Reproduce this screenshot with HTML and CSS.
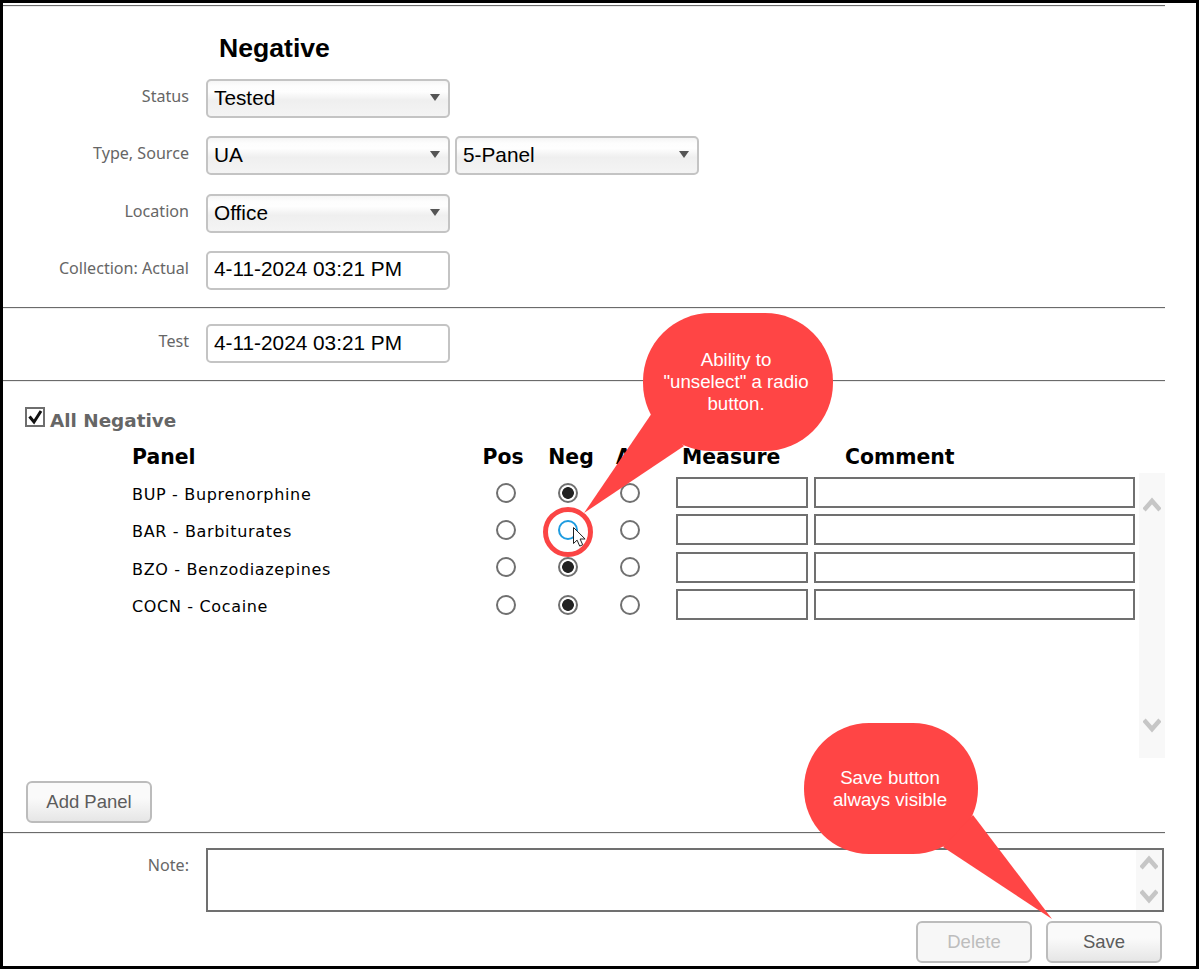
FILE: index.html
```html
<!DOCTYPE html>
<html lang="en">
<head>
<meta charset="utf-8">
<title>Drug test result</title>
<link rel="stylesheet" href="styles.css">
</head>
<body>
<div class="frame">
  <section class="section sec-collect">
    <h1 class="title">Negative</h1>
    <div class="field">
      <label class="label">Status</label>
      <div class="select"><span>Tested</span></div>
    </div>
    <div class="field">
      <label class="label">Type, Source</label>
      <div class="select"><span>UA</span></div>
      <div class="select"><span>5-Panel</span></div>
    </div>
    <div class="field">
      <label class="label">Location</label>
      <div class="select"><span>Office</span></div>
    </div>
    <div class="field">
      <label class="label">Collection: Actual</label>
      <input class="text" type="text" value="4-11-2024 03:21 PM">
    </div>
  </section>
  <section class="section sec-test">
    <div class="field">
      <label class="label">Test</label>
      <input class="text" type="text" value="4-11-2024 03:21 PM">
    </div>
  </section>
  <section class="section sec-panels">
    <div class="all-neg">
      <svg class="check" width="21" height="21" viewBox="0 0 21 21"><rect x="1" y="1" width="18" height="18" fill="#fff" stroke="#6e6e6e" stroke-width="2"/><path d="M4.5 9.5 9 15 16 4" fill="none" stroke="#111" stroke-width="3"/></svg>
      <span class="all-text">All Negative</span>
    </div>
    <div class="grid head">
      <div class="h-panel">Panel</div>
      <div class="h-radio h-pos">Pos</div>
      <div class="h-radio h-neg">Neg</div>
      <div class="h-radio h-alt">Alt</div>
      <div class="h-measure">Measure</div>
      <div class="h-comment">Comment</div>
    </div>
    <div class="scroller">
      <div class="rows">
        <div class="grid row">
          <div class="name">BUP - Buprenorphine</div>
          <input class="radio" type="radio" name="r1">
          <input class="radio" type="radio" name="r1" checked>
          <input class="radio" type="radio" name="r1">
          <input class="box measure" type="text">
          <input class="box" type="text">
        </div>
        <div class="grid row">
          <div class="name">BAR - Barbiturates</div>
          <input class="radio" type="radio" name="r2">
          <input class="radio hover" type="radio" name="r2">
          <input class="radio" type="radio" name="r2">
          <input class="box measure" type="text">
          <input class="box" type="text">
        </div>
        <div class="grid row">
          <div class="name">BZO - Benzodiazepines</div>
          <input class="radio" type="radio" name="r3">
          <input class="radio" type="radio" name="r3" checked>
          <input class="radio" type="radio" name="r3">
          <input class="box measure" type="text">
          <input class="box" type="text">
        </div>
        <div class="grid row">
          <div class="name">COCN - Cocaine</div>
          <input class="radio" type="radio" name="r4">
          <input class="radio" type="radio" name="r4" checked>
          <input class="radio" type="radio" name="r4">
          <input class="box measure" type="text">
          <input class="box" type="text">
        </div>
      </div>
      <div class="scrollbar">
        <svg width="18" height="15" viewBox="0 0 18 15"><path d="M1 13 9 4 17 13" fill="none" stroke="#c6c6c6" stroke-width="4.5"/></svg>
        <svg width="18" height="15" viewBox="0 0 18 15"><path d="M1 2 9 11 17 2" fill="none" stroke="#c6c6c6" stroke-width="4.5"/></svg>
      </div>
    </div>
    <button class="btn add" type="button">Add Panel</button>
  </section>
  <section class="section sec-note">
    <div class="field note-field">
      <label class="label note-label">Note:</label>
      <div class="note">
        <textarea class="note-text"></textarea>
        <div class="note-bar">
          <svg width="18" height="15" viewBox="0 0 18 15"><path d="M1 13 9 4 17 13" fill="none" stroke="#c6c6c6" stroke-width="4.5"/></svg>
          <svg width="18" height="15" viewBox="0 0 18 15"><path d="M1 2 9 11 17 2" fill="none" stroke="#c6c6c6" stroke-width="4.5"/></svg>
        </div>
      </div>
    </div>
    <div class="actions">
      <button class="btn disabled" type="button">Delete</button>
      <button class="btn" type="button">Save</button>
    </div>
  </section>
</div>
<svg class="overlay" width="1199" height="969" viewBox="0 0 1199 969">
  <g fill="#ff4545">
    <rect x="643" y="313" width="190" height="138" rx="68" ry="68"/>
    <path d="M652 413 584 513 684 446Z"/>
    <rect x="804" y="723" width="174" height="131" rx="65" ry="65"/>
    <path d="M973 815 1052 919 943 847Z"/>
  </g>
  <circle cx="568" cy="532" r="22.5" fill="none" stroke="#fb4444" stroke-width="5"/>
  <path d="M573.5 527.5v16l3.6-3.4 2.6 6 3-1.3-2.6-5.8h5z" fill="#fff" stroke="#222" stroke-width="1"/>
  <g class="callout-text">
    <text x="736" y="366">Ability to</text>
    <text x="736" y="388">"unselect" a radio</text>
    <text x="736" y="410">button.</text>
    <text x="890" y="784">Save button</text>
    <text x="890" y="806">always visible</text>
  </g>
</svg>
</body>
</html>
```

FILE: styles.css
```css
* { box-sizing: border-box; }
html, body { margin: 0; padding: 0; background: #fff; }
body { width: 1199px; height: 969px; overflow: hidden; position: relative; font-family: "Liberation Sans", Arial, sans-serif; }

.frame {
  width: 1199px;
  height: 969px;
  border: 3px solid #000;
  padding-top: 2px;
  display: flex;
  flex-direction: column;
  background: #fff;
}

.section {
  width: 1162px;
  border-top: 1px solid #6b6b6b;
  box-shadow: inset 0 1px 0 #ececec;
  flex: none;
}
.sec-collect { height: 302px; }
.sec-test { height: 73px; padding-top: 16px; }
.sec-panels { height: 452px; padding-top: 26px; }
.sec-note { flex: 1; padding-top: 15px; }

.title {
  margin: 0 0 0 216px;
  height: 73px;
  padding-top: 27px;
  font-size: 26.6px;
  line-height: 30px;
  font-weight: 700;
  color: #000;
}

.field {
  display: flex;
  align-items: flex-start;
  margin-bottom: 18.3px;
  height: 39px;
}
.label {
  width: 186px;
  margin-right: 17px;
  text-align: right;
  font-family: "Noto Sans", sans-serif;
  font-size: 16.1px;
  line-height: 35px;
  color: #666;
}
.note-label { line-height: 35px; }

.select {
  position: relative;
  width: 244px;
  height: 39px;
  margin-right: 5px;
  border: 2px solid #c4c4c4;
  border-radius: 5px;
  background: linear-gradient(#f5f5f5 0, #fdfdfd 15%, #fefefe 30%, #efefef 55%, #f4f4f4 100%);
  padding-left: 6px;
  font-size: 20.8px;
  line-height: 33px;
  color: #000;
}
.select::after {
  content: "";
  position: absolute;
  right: 8px;
  top: 13px;
  border-left: 5.5px solid transparent;
  border-right: 5.5px solid transparent;
  border-top: 7px solid #555;
}

.text {
  width: 244px;
  height: 39px;
  border: 2px solid #c4c4c4;
  border-radius: 5px;
  background: #fff;
  padding: 0 6px 2px;
  font-family: "Liberation Sans", Arial, sans-serif;
  font-size: 20.8px;
  color: #000;
  outline: none;
}

.all-neg {
  display: flex;
  align-items: flex-start;
  margin-left: 22px;
  gap: 4px;
  height: 22px;
  font-family: "DejaVu Sans", Verdana, sans-serif;
  font-weight: 700;
  font-size: 18.4px;
  color: #666;
}
.all-text { padding-top: 2px; line-height: 24px; }

.grid {
  display: grid;
  grid-template-columns: 343px 62px 62px 62px 153px 321px;
  padding-left: 129px;
  align-items: center;
}
.head {
  margin-top: 15px;
  height: 29px;
  padding-bottom: 4px;
  font-family: "DejaVu Sans", Verdana, sans-serif;
  font-weight: 700;
  font-size: 20.4px;
  color: #000;
}
.h-radio { text-align: center; }
.h-pos { padding-right: 6px; }
.h-neg { padding-left: 6px; }
.h-alt { text-align: left; padding-left: 17px; }
.h-measure { padding-left: 21px; }
.h-comment { padding-left: 31px; }

.scroller {
  display: flex;
  justify-content: space-between;
  width: 1162px;
  height: 285px;
}
.rows { padding-top: 1px; }
.row { height: 37.33px; }
.name {
  font-family: "DejaVu Sans", Verdana, sans-serif;
  font-size: 16px;
  letter-spacing: 0.66px;
  color: #000;
  padding-top: 4px;
}

.radio {
  appearance: none;
  -webkit-appearance: none;
  margin: 0 auto;
  width: 20px;
  height: 20px;
  border: 2px solid #707070;
  border-radius: 50%;
  background: #fff;
  outline: none;
}
.radio:checked { background: radial-gradient(circle, #222 0, #222 5.5px, #fff 6.2px); }
.radio.hover { border-color: #1e9ce0; }

.box {
  height: 31px;
  width: 321px;
  border: 2px solid #707070;
  background: #fff;
  outline: none;
  padding: 0 4px;
}
.box.measure { width: 132px; margin-left: 15px; }

.scrollbar {
  width: 26px;
  height: 285px;
  background: #f8f8f8;
  display: flex;
  flex-direction: column;
  justify-content: space-between;
  align-items: center;
  padding: 24px 0 25px;
}

.btn {
  display: block;
  width: 126px;
  height: 42px;
  border: 2px solid #bcbcbc;
  border-radius: 6px;
  background: linear-gradient(#fafafa, #fafafa 40%, #e6e6e6);
  font-family: "Liberation Sans", Arial, sans-serif;
  font-size: 18.5px;
  color: #5c5c5c;
  padding: 0;
}
.add { margin: 23px 0 0 23px; }

.note-field { height: auto; margin-bottom: 9px; }
.note {
  display: flex;
  width: 958px;
  height: 64px;
  border: 2px solid #707070;
  background: #fff;
}
.note-text {
  flex: 1;
  border: 0;
  outline: none;
  resize: none;
  background: transparent;
}
.note-bar {
  width: 26px;
  background: #f8f8f8;
  display: flex;
  flex-direction: column;
  justify-content: space-between;
  align-items: center;
  padding: 5px 0 6px;
}

.actions {
  display: flex;
  justify-content: flex-end;
  gap: 14px;
  padding-right: 3px;
}
.actions .btn { width: 116px; }
.btn.disabled { background: #f7f7f7; color: #bdbdbd; }

.overlay { position: absolute; left: 0; top: 0; pointer-events: none; }
.callout-text text {
  font-family: "Liberation Sans", Arial, sans-serif;
  font-size: 18.7px;
  fill: #fff;
  text-anchor: middle;
}
```
